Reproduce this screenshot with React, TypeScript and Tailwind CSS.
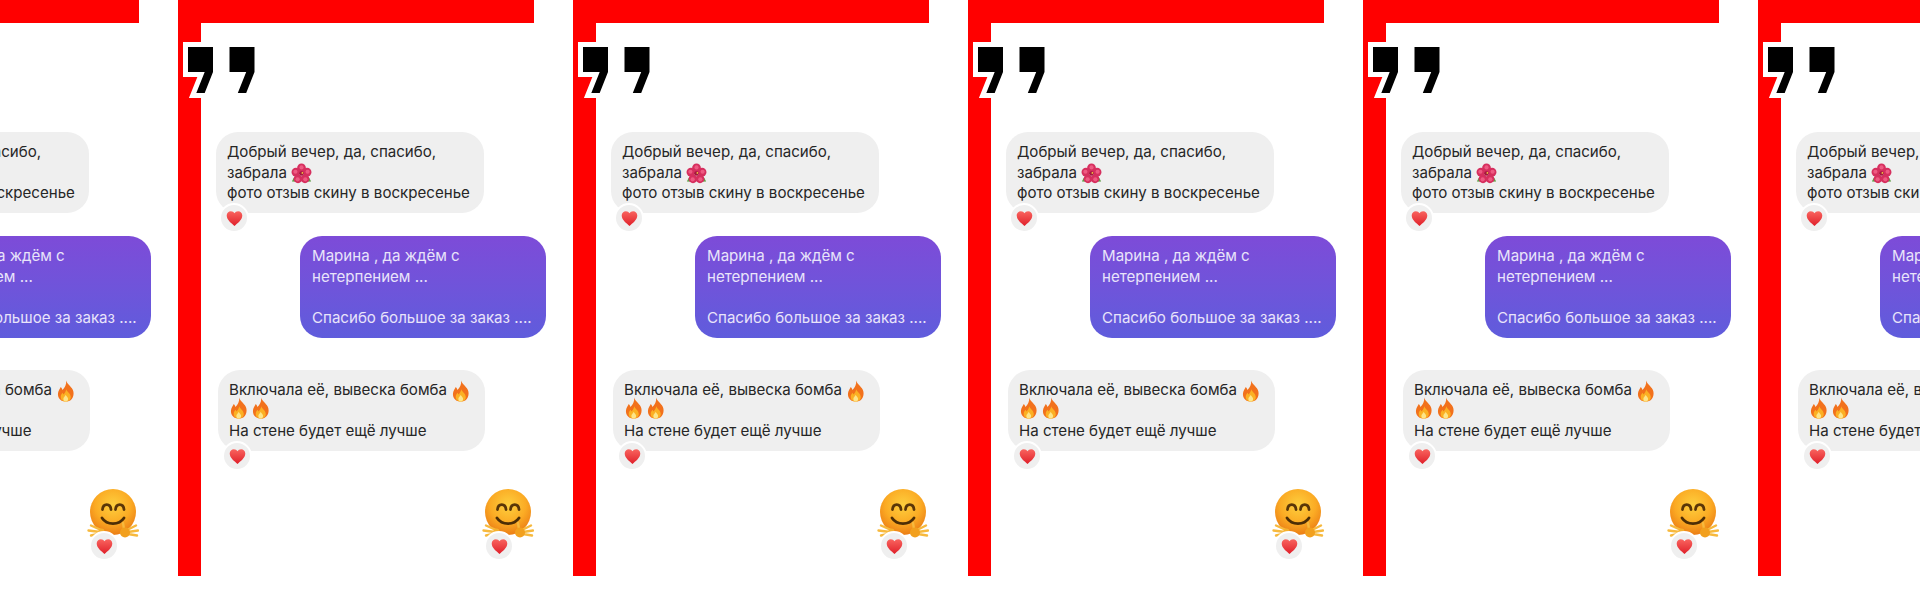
const Heart = ({ size = 17 }: { size?: number }) => (
  <svg width={size} height={size} viewBox="0 0 24 24">
    <defs>
      <linearGradient id="heartFill" x1="0" y1="0" x2="0" y2="1">
        <stop offset="0" stopColor="#f9645f" />
        <stop offset="1" stopColor="#e0202a" />
      </linearGradient>
    </defs>
    <path
      d="M12 22.5C8 19 1 14 1 7.8 1 4 3.8 1.6 6.9 1.6c2.2 0 4 1.1 5.1 3 1.1-1.9 2.9-3 5.1-3C20.2 1.6 23 4 23 7.8 23 14 16 19 12 22.5z"
      fill="url(#heartFill)"
    />
  </svg>
);

const Hibiscus = () => (
  <svg width="21" height="21" viewBox="0 0 24 24" className="-my-1 inline-block align-[-2px]">
    <path d="M3 17l-2 4 5 0.5 2-3zM21 17l2 4-5 0.5-2-3z" fill="#5f9e46" />
    <g fill="#d62f5e">
      <circle cx="12" cy="5.6" r="5" />
      <circle cx="5.6" cy="10.4" r="5" />
      <circle cx="18.4" cy="10.4" r="5" />
      <circle cx="8" cy="18" r="5" />
      <circle cx="16" cy="18" r="5" />
    </g>
    <g fill="#ee5a82">
      <circle cx="12" cy="5" r="2.4" />
      <circle cx="5" cy="10" r="2.4" />
      <circle cx="19" cy="10" r="2.4" />
      <circle cx="7.6" cy="18.6" r="2.4" />
      <circle cx="16.4" cy="18.6" r="2.4" />
    </g>
    <circle cx="12" cy="12" r="2.6" fill="#a3173f" />
    <circle cx="13" cy="11.4" r="1" fill="#f7c83f" />
  </svg>
);

const Fire = () => (
  <svg width="19" height="22" viewBox="0 0 19.5 24" className="-my-1 inline-block align-[-3px]">
    <path
      d="M10.5 0.5c1 4 5 6 7.2 10 2.2 4.5 0.6 13-7.7 13C3 23.5 0.3 17.5 2 12.5c0.6-1.8 1.8-3 2.5-5 1.2 1 1.7 2.2 1.8 3.5C8.8 8.5 11 5 10.5 0.5z"
      fill="#f2711c"
    />
    <path
      d="M10.5 10c0.6 2.5 5 4.5 5 8.5 0 3-2.5 5-5.5 5s-5.5-2-5.5-5c0-2.2 1.2-3.4 2-4.6 0.5 0.7 0.9 1.3 1 2 1.3-1.6 2.9-3.4 3-5.9z"
      fill="#fbb024"
    />
    <path d="M10 16c0.4 1.4 2.6 2.6 2.6 4.6 0 1.7-1.2 2.9-2.6 2.9s-2.6-1.2-2.6-2.9c0-2 2.2-3 2.6-4.6z" fill="#fde58a" />
  </svg>
);

const HugFace = () => (
  <svg width="52" height="50" viewBox="0 0 52 50" className="block">
    <defs>
      <radialGradient id="hugFace" cx="0.5" cy="0.35" r="0.7">
        <stop offset="0" stopColor="#fdcf3e" />
        <stop offset="0.55" stopColor="#fbab24" />
        <stop offset="1" stopColor="#e97512" />
      </radialGradient>
    </defs>
    <circle cx="26" cy="23" r="23" fill="url(#hugFace)" />
    <path d="M15.5 20.5c0.5-6.5 8-6.5 8.5 0M28.5 20.5c0.5-6.5 8-6.5 8.5 0" fill="none" stroke="#5a3608" strokeWidth="2.8" strokeLinecap="round" />
    <path d="M15 29c5 7.5 17 7.5 22 0" fill="none" stroke="#4d2e06" strokeWidth="2.8" strokeLinecap="round" />
    <g stroke="#f7b93d" strokeWidth="2.4" strokeLinecap="round">
      <path d="M14 41L4 36.5M13 43L1.5 41.5M13 44.5L4 46.5" />
      <path d="M40 41L49 36.5M41 43L51 41.5M41 45L50 46.5M37 40L36 34" />
    </g>
    <circle cx="14.5" cy="42.5" r="3" fill="#f5b02e" />
    <circle cx="38" cy="43.5" r="5" fill="#f2a01e" />
  </svg>
);

const Reaction = ({ className }: { className: string }) => (
  <div
    className={`absolute flex h-[30px] w-[30px] items-center justify-center rounded-full border-2 border-white bg-[#efefef] ${className}`}
  >
    <Heart />
  </div>
);

const Line = ({ children }: { children?: React.ReactNode }) => (
  <div className="h-[20.7px] whitespace-nowrap">{children}</div>
);

const Tile = () => (
  <div className="w-[395px] shrink-0">
    <div className="h-[23px] w-[356px] bg-[#ff0000]" />
    <div className="flex h-[553px] w-[368px] flex-col border-l-[23px] border-[#ff0000]">
      <svg width="67" height="46" viewBox="0 0 67 46" className="mt-[24px] -ml-[13px] shrink-0 overflow-visible">
        <path
          d="M0 0H25V25L16.7 46H8.3L16.7 25H0z"
          fill="#000"
          stroke="#fff"
          strokeWidth="10"
          strokeLinejoin="miter"
          paintOrder="stroke"
        />
        <path d="M41.5 0H66.5V25L58.2 46H49.8L58.2 25H41.5z" fill="#000" />
      </svg>

      <div className="relative mt-[39px] ml-[15px] h-[81px] w-[268px] rounded-[22px] bg-[#efefef] px-[11px] py-[10px] text-[15.1px] leading-[20.7px] text-[#262626]">
        <Line>Добрый вечер, да, спасибо,</Line>
        <Line>
          забрала <Hibiscus />
        </Line>
        <Line>фото отзыв скину в воскресенье</Line>
        <Reaction className="left-[3px] top-[71px]" />
      </div>

      <div className="mt-[23px] h-[102px] w-[246px] self-end rounded-[22px] bg-gradient-to-b from-[#7d4bd8] to-[#5f5cdc] px-3 py-[10px] text-[15.1px] leading-[20.7px] text-[#e9e4fa]">
        <Line>Марина , да ждём с</Line>
        <Line>нетерпением ...</Line>
        <Line />
        <Line>Спасибо большое за заказ ....</Line>
      </div>

      <div className="relative mt-[32px] ml-[17px] h-[81px] w-[267px] rounded-[22px] bg-[#efefef] px-[11px] py-[10px] text-[15.1px] leading-[20.7px] text-[#262626]">
        <Line>
          Включала её, вывеска бомба <Fire />
        </Line>
        <Line>
          <span className="inline-flex gap-[3px]">
            <Fire />
            <Fire />
          </span>
        </Line>
        <Line>На стене будет ещё лучше</Line>
        <Reaction className="left-[4px] top-[71px]" />
      </div>

      <div className="relative mt-[38px] mr-[12px] self-end">
        <HugFace />
        <Reaction className="left-[2px] top-[42px]" />
      </div>
    </div>
  </div>
);

export default function App() {
  return (
    <div className="h-[599px] w-[1920px] overflow-hidden bg-white font-['Inter',sans-serif]">
      <div className="-ml-[217px] flex">
        {[0, 1, 2, 3, 4, 5].map((i) => (
          <Tile key={i} />
        ))}
      </div>
    </div>
  );
}
